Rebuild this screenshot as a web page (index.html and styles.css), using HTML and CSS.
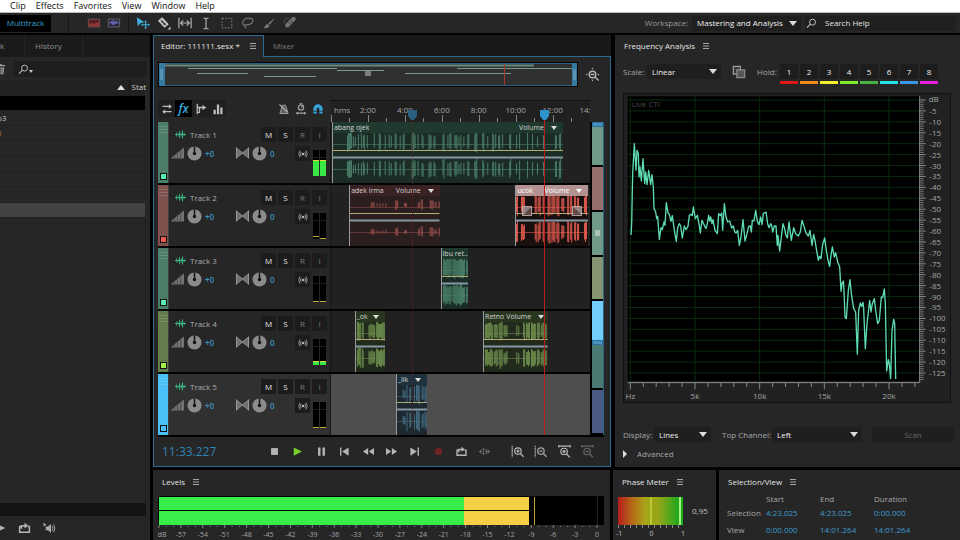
FILE: index.html
```html
<!DOCTYPE html>
<html lang="en">
<head>
<meta charset="utf-8">
<title>111111.sesx</title>
<link rel="stylesheet" href="styles.css">
</head>
<body>
<svg class="sprite" aria-hidden="true">
  <symbol id="i-spectral" viewBox="0 0 16 16"><path d="M1.500 3.500h13v9h-13z" fill="#5a1f22" stroke="#77575a"/><path d="M2 9l3-1 3 1 3-2 3 1v4H2z" fill="#8d3532"/></symbol>
  <symbol id="i-waveview" viewBox="0 0 16 16"><path d="M1.500 3.500h13v9h-13z" fill="#26263c" stroke="#6a6a72"/><path d="M2 8h2l1-2 1 4 1-5 1 5 1-4 1 3 1-3 1 2h2" fill="none" stroke="#7670c8"/></symbol>
  <symbol id="i-move" viewBox="0 0 16 16"><path d="M1 1.500L9.500 7 5.200 8 2 12z" fill="#3fb0e0"/><path d="M11 6v8M7 10h8" stroke="#3fb0e0" stroke-width="1.200"/><path d="M11 4.800l1.600 2H9.400zM11 15.200l1.600-2H9.400zM5.800 10l2-1.600v3.200zM16 10l-2-1.600v3.200z" fill="#3fb0e0"/></symbol>
  <symbol id="i-razor" viewBox="0 0 16 16"><path d="M1 5.500L6 1.500 13.500 9.500 8.500 13.500z" fill="#c4c4c4"/><path d="M4.500 5l5.500 5.500M5 7.200l2-1.700M7.500 9.700l2-1.700" stroke="#2a2a2a" stroke-width="1.200"/><path d="M15.500 12v3.500H12z" fill="#c4c4c4"/></symbol>
  <symbol id="i-slip" viewBox="0 0 16 16"><path d="M1 2v12M15 2v12M3 8h10M6 5L3 8l3 3M10 5l3 3-3 3" fill="none" stroke="#b8b8b8" stroke-width="1.300"/></symbol>
  <symbol id="i-ibeam" viewBox="0 0 16 16"><path d="M5 2.500h2L8 4l1-1.500h2M8 4v9M5 14.500h2L8 13l1 1.500h2" fill="none" stroke="#b8b8b8" stroke-width="1.200"/></symbol>
  <symbol id="i-marquee" viewBox="0 0 16 16"><path d="M2.500 2.500h11v11h-11z" fill="none" stroke="#777" stroke-width="1.200" stroke-dasharray="2 1.500"/></symbol>
  <symbol id="i-lasso" viewBox="0 0 16 16"><path d="M4 11C-1 8 4 2 9 2.500c6 0 6 5 1 7-3 1.200-6 0-6 1.500s2 1 1.500 3.500" fill="none" stroke="#777" stroke-width="1.300"/></symbol>
  <symbol id="i-brush" viewBox="0 0 16 16"><path d="M15 2L9 10 7 8.500zM6.500 9l2 2c-1 3-4 3-7.500 3 2.500-1 2.500-4.500 5.500-5z" fill="#777"/></symbol>
  <symbol id="i-heal" viewBox="0 0 16 16"><path d="M5 10.500L12 3.500" stroke="#747474" stroke-width="5" stroke-linecap="round"/><path d="M6.500 7l3.500 3.500M8.500 5l3.500 3.500" stroke="#262626" stroke-width=".8"/><path d="M1.500 8c0-4 2-6 5-5.500" fill="none" stroke="#747474" stroke-dasharray="1.500 1"/></symbol>
  <symbol id="i-search" viewBox="0 0 16 16"><circle cx="9.500" cy="6" r="4.300" fill="none" stroke="#c2c2c2" stroke-width="1.400"/><path d="M6.500 9L1.500 14" stroke="#c2c2c2" stroke-width="1.600"/></symbol>
  <symbol id="i-trash" viewBox="0 0 16 16"><path d="M2 3.500h12M6 2.500h4" stroke="#a2a2a2" stroke-width="1.800"/><path d="M3 6h10l-1 9H4z" fill="#999"/><path d="M6 7v7M8 7v7M10 7v7" stroke="#444"/></symbol>
  <symbol id="i-menu" viewBox="0 0 8 8"><path d="M1 1.500h6M1 4h6M1 6.500h6" stroke="#a5a5a5"/></symbol>
  <symbol id="i-swap" viewBox="0 0 16 16"><path d="M2 4.500h9M5 11.500h9" stroke="#bdbdbd" stroke-width="1.700"/><path d="M10.500 1.500v6l4-3zM5.500 8.500v6l-4-3z" fill="#bdbdbd"/></symbol>
  <symbol id="i-send" viewBox="0 0 16 16"><path d="M3 1v14M3 6h8" fill="none" stroke="#bdbdbd" stroke-width="1.700"/><path d="M3 12.500h3V6" fill="none" stroke="#bdbdbd" stroke-width="1.500"/><path d="M10 2.500v7l5-3.500z" fill="#bdbdbd"/></symbol>
  <symbol id="i-bars" viewBox="0 0 16 16"><path d="M2 9h3v6H2zM6.500 2h3v13h-3zM11 6h3v9h-3z" fill="#bdbdbd"/></symbol>
  <symbol id="i-metronome" viewBox="0 0 16 16"><path d="M6 3h4l3.500 11h-11z" fill="#5c5c5c" stroke="#a0a0a0" stroke-width="1.300"/><path d="M2 2l10 10" stroke="#b0b0b0" stroke-width="1.500"/></symbol>
  <symbol id="i-timer" viewBox="0 0 16 16"><circle cx="8" cy="6" r="3.500" fill="none" stroke="#a5a5a5" stroke-width="1.600"/><path d="M6 1h4M8 6l2-2M2 13.500h12" fill="none" stroke="#a5a5a5" stroke-width="1.400"/><path d="M4 11.500v4l-3-2zM12 11.500v4l3-2z" fill="#a5a5a5"/></symbol>
  <symbol id="i-magnet" viewBox="0 0 16 16"><path d="M4 14V8a4 4 0 0 1 8 0v6" fill="none" stroke="#36a4da" stroke-width="4.500"/><path d="M1 11h6M9 11h6" stroke="#222"/></symbol>
  <symbol id="i-wave" viewBox="0 0 16 16"><path d="M0 8h16M2.500 5v6M4.800 7v2M6.500 3v10M9 5v6M11 2v12M13.300 6v4" stroke="#3ab585" stroke-width="1.400"/></symbol>
  <symbol id="i-volume" viewBox="0 0 14 12"><path d="M0 11.500L14 0v12H0z" fill="#737373"/><path d="M3.500 8v4M7 5v7M10.500 2v10" stroke="#4a4a4a"/></symbol>
  <symbol id="i-pan" viewBox="0 0 14 12"><path d="M1 1L7 5.500 13 1v10L7 6.500 1 11z" fill="#707070"/><path d="M.500 0v12M13.500 0v12" stroke="#a5a5a5"/><path d="M1 1l6 5-6 5M13 1L7 6l6 5" fill="none" stroke="#999" stroke-width=".8"/></symbol>
  <symbol id="i-knob" viewBox="0 0 16 16"><circle cx="8" cy="8" r="7.500" fill="#8b8b8b"/><circle cx="8" cy="8" r="1.800" fill="#111"/><path d="M8 .5V8" stroke="#161616" stroke-width="1.600"/></symbol>
  <symbol id="i-monitor" viewBox="0 0 16 16"><circle cx="8" cy="8" r="2" fill="#b5b5b5"/><path d="M5 4.500Q2.800 8 5 11.500M11 4.500q2.200 3.500 0 7M3 2.500Q-.5 8 3 13.500M13 2.500q3.500 5.500 0 11" fill="none" stroke="#aaa" stroke-width="1.300"/></symbol>
  <symbol id="i-stop" viewBox="0 0 16 16"><path d="M3 3h10v10H3z" fill="#b5b5b5"/></symbol>
  <symbol id="i-play" viewBox="0 0 16 16"><path d="M2.500 2l12 6-12 6z" fill="#76d02c"/></symbol>
  <symbol id="i-playgrey" viewBox="0 0 16 16"><path d="M2 2l13 6-13 6z" fill="#b5b5b5"/></symbol>
  <symbol id="i-pause" viewBox="0 0 16 16"><path d="M3 2h3.500v12H3zM9.500 2H13v12H9.500z" fill="#b5b5b5"/></symbol>
  <symbol id="i-prev" viewBox="0 0 16 16"><path d="M1.500 2h2v12h-2zM14 2v12L4.500 8z" fill="#b5b5b5"/></symbol>
  <symbol id="i-next" viewBox="0 0 16 16"><path d="M12.500 2h2v12h-2zM2 2v12l9.500-6z" fill="#b5b5b5"/></symbol>
  <symbol id="i-rew" viewBox="0 0 16 16"><path d="M7.500 3v10L0 8zM16 3v10L8.500 8z" fill="#b5b5b5"/></symbol>
  <symbol id="i-fwd" viewBox="0 0 16 16"><path d="M0 3v10l7.500-5zM8.500 3v10L16 8z" fill="#b5b5b5"/></symbol>
  <symbol id="i-rec" viewBox="0 0 16 16"><circle cx="8" cy="8" r="5.500" fill="#6b2422"/></symbol>
  <symbol id="i-loop" viewBox="0 0 16 16"><path d="M3.500 6H1.500v7.500h13V6h-2M4 9V5h5" fill="none" stroke="#b5b5b5" stroke-width="2"/><path d="M8 1v7.500L13 5z" fill="#b5b5b5"/></symbol>
  <symbol id="i-skip" viewBox="0 0 16 16"><path d="M5 4L1 8l4 4M0 8h4M6.500 3v10M9 8h7M9 4l3.500 4L9 12M12.500 5l3 3-3 3" fill="none" stroke="#707070" stroke-width="1.400"/></symbol>
  <symbol id="i-zinv" viewBox="0 0 16 16"><path d="M1.500 1v14" stroke="#b5b5b5" stroke-width="1.500" stroke-dasharray="2 .6"/><circle cx="8.500" cy="7.500" r="4" fill="none" stroke="#b5b5b5" stroke-width="1.500"/><path d="M6.500 7.500h4M8.500 5.500v4M11.500 10.500l4 4" stroke="#b5b5b5" stroke-width="1.600"/></symbol>
  <symbol id="i-zoutv" viewBox="0 0 16 16"><path d="M1.500 1v14" stroke="#a5a5a5" stroke-width="1.500" stroke-dasharray="2 .6"/><circle cx="8.500" cy="7.500" r="4" fill="none" stroke="#a5a5a5" stroke-width="1.500"/><path d="M6.500 7.500h4M11.500 10.500l4 4" stroke="#a5a5a5" stroke-width="1.600"/></symbol>
  <symbol id="i-zinh" viewBox="0 0 16 16"><path d="M1 1.500h14M1 0v3M15 0v3" stroke="#b5b5b5" stroke-width="1.500"/><circle cx="7.500" cy="8" r="4" fill="none" stroke="#b5b5b5" stroke-width="1.500"/><path d="M5.500 8h4M7.500 6v4M10.500 11l4 4" stroke="#b5b5b5" stroke-width="1.600"/></symbol>
  <symbol id="i-zouth" viewBox="0 0 16 16"><path d="M1 1.500h14M1 0v3M15 0v3" stroke="#666" stroke-width="1.500"/><circle cx="7.500" cy="8" r="4" fill="none" stroke="#666" stroke-width="1.500"/><path d="M5.500 8h4M10.500 11l4 4" stroke="#666" stroke-width="1.600"/></symbol>
  <symbol id="i-zfull" viewBox="0 0 16 16"><circle cx="8" cy="8" r="3.500" fill="none" stroke="#b5b5b5" stroke-width="1.500"/><path d="M6 8h4M10.500 10.500l4 4" stroke="#b5b5b5" stroke-width="1.500"/><path d="M8 .5l1 2H7zM8 15.500l1-2H7zM.5 8l2-1v2zM15.500 8l-2-1v2z" fill="#b5b5b5"/></symbol>
  <symbol id="i-speaker" viewBox="0 0 16 16"><path d="M0 1l4 2.500L0 6zM3 6h3l4-3.500v12L6 11H3z" fill="#aaa"/><path d="M11.500 5.500q2 3 0 6M13.500 3.500q3.500 5 0 10" fill="none" stroke="#aaa" stroke-width="1.300"/></symbol>
  <symbol id="i-copy" viewBox="0 0 16 16"><path d="M1.500 1.500h8v9h-8z" fill="#3a3a3a" stroke="#a0a0a0" stroke-width="1.400"/><path d="M5.500 5.500h9v9h-9z" fill="#555" stroke="#8c8c8c" stroke-width="1.400"/></symbol>
</svg>

<nav class="menubar">
  <a href="#">Clip</a><a href="#">Effects</a><a href="#">Favorites</a><a href="#">View</a><a href="#">Window</a><a href="#">Help</a>
</nav>

<header class="toolbar">
  <button class="mode">Multitrack</button>
  <div class="tool-group views">
    <button aria-label="Spectral view"><svg><use href="#i-spectral"/></svg></button>
    <button aria-label="Waveform view"><svg><use href="#i-waveview"/></svg></button>
  </div>
  <div class="tool-group tools">
    <button aria-label="Move"><svg><use href="#i-move"/></svg></button>
    <button aria-label="Razor"><svg><use href="#i-razor"/></svg></button>
    <button aria-label="Slip"><svg><use href="#i-slip"/></svg></button>
    <button aria-label="Time selection"><svg><use href="#i-ibeam"/></svg></button>
    <button aria-label="Marquee"><svg><use href="#i-marquee"/></svg></button>
    <button aria-label="Lasso"><svg><use href="#i-lasso"/></svg></button>
    <button aria-label="Brush"><svg><use href="#i-brush"/></svg></button>
    <button aria-label="Healing"><svg><use href="#i-heal"/></svg></button>
  </div>
  <label class="dim workspace-label" for="workspace">Workspace:</label>
  <span class="select workspace"><select id="workspace"><option>Mastering and Analysis</option></select></span>
  <label class="help-search"><svg><use href="#i-search"/></svg><input type="text" value="Search Help" aria-label="Search Help"></label>
</header>

<main class="workspace-grid">
  <section class="files">
    <div class="tabs"><a class="tab cut" href="#">k</a><a class="tab" href="#">History</a></div>
    <div class="files-tools">
      <button class="trash" aria-label="Delete"><svg><use href="#i-trash"/></svg></button>
      <div class="files-search"><svg><use href="#i-search"/></svg><i class="caret"></i></div>
    </div>
    <table class="files-table">
      <thead><tr><th><i class="caret up"></i></th><th class="status">Stat</th></tr></thead>
      <tbody>
        <tr class="black"><td colspan="2"></td></tr>
        <tr><td colspan="2">o3</td></tr>
        <tr><td colspan="2" class="warn">3</td></tr>
        <tr><td colspan="2"></td></tr>
        <tr><td colspan="2"></td></tr>
        <tr><td colspan="2"></td></tr>
        <tr><td colspan="2"></td></tr>
        <tr class="active"><td colspan="2"></td></tr>
      </tbody>
    </table>
    <div class="files-rest"></div>
    <div class="files-scroll"></div>
    <div class="files-foot">
      <button aria-label="Play"><svg><use href="#i-playgrey"/></svg></button>
      <button aria-label="Loop"><svg><use href="#i-loop"/></svg></button>
      <button aria-label="Auto-play"><svg><use href="#i-speaker"/></svg></button>
    </div>
  </section>

  <div class="right">
    <div class="row top-row">
      <section class="editor">
        <div class="editor-tabs">
          <a class="tab current" href="#">Editor: 111111.sesx *<svg class="menu"><use href="#i-menu"/></svg></a>
          <a class="tab mixer" href="#">Mixer</a>
        </div>
        <div class="editor-body">
          <div class="overview-row">
            <svg class="overview" viewBox="158 62 420 25" preserveAspectRatio="none">
              <path d="M158 62h420v25H158z" fill="#050505"/>
              <path d="M159 63h418v23H159z" fill="#2c5f7d"/>
              <path d="M159 64h418v21H159z" fill="#303030"/>
              <path d="M165 65.500h369" stroke="#668b7c" stroke-width="2"/>
              <path d="M188 68.500h149M197 73.500h51M264 76.500h52M337 70.500h47M457 68.500h115M405 73.500h106" stroke="#749b8a"/>
              <path d="M365 71h6v5h-6z" fill="#7d7d7d"/>
              <path d="M504.500 64v21" stroke="#a5362f"/>
              <path d="M159 63h6v23h-6zM572 63h5v23h-5z" fill="#3679a1"/>
              <path d="M160 69h3v11h-3zM573 69h3v11h-3z" fill="#5a93b4"/>
            </svg>
            <button class="zoom-full" aria-label="Zoom out full"><svg><use href="#i-zfull"/></svg></button>
          </div>
          <div class="session">
            <div class="heads" id="heads">
              <div class="head-tools">
                <div class="tool-set">
                  <button aria-label="Inputs and outputs"><svg><use href="#i-swap"/></svg></button>
                  <button class="fx">fx</button>
                  <button aria-label="Sends"><svg><use href="#i-send"/></svg></button>
                  <button aria-label="EQ"><svg><use href="#i-bars"/></svg></button>
                </div>
                <div class="tool-set plain">
                  <button aria-label="Metronome"><svg><use href="#i-metronome"/></svg></button>
                  <button aria-label="Time stretch"><svg><use href="#i-timer"/></svg></button>
                  <button aria-label="Snapping"><svg><use href="#i-magnet"/></svg></button>
                </div>
              </div>
            </div>
            <div class="lanes" id="lanes"><div class="ruler" id="ruler"><span class="unit">hms</span></div></div>
            <div class="track-nav">
              <i class="grab"></i><i class="seg s1"></i><i class="seg s2"></i><i class="seg s3"></i><i class="seg s4"></i><i class="seg s5"></i><i class="grab"></i><i class="seg s6"></i><i class="seg s7"></i>
            </div>
          </div>
          <div class="transport">
            <span class="time">11:33.227</span>
            <div class="transport-buttons" id="transport"></div>
          </div>
        </div>
      </section>

      <section class="frequency">
        <h2>Frequency Analysis<svg class="menu"><use href="#i-menu"/></svg></h2>
        <div class="scale-row">
          <label for="scale">Scale:</label>
          <span class="select scale"><select id="scale"><option>Linear</option></select></span>
          <button class="copy" aria-label="Copy graph"><svg><use href="#i-copy"/></svg></button>
          <span class="hold-label">Hold:</span>
          <div class="holds">
            <button class="h1">1</button><button class="h2">2</button><button class="h3">3</button><button class="h4">4</button><button class="h5">5</button><button class="h6">6</button><button class="h7">7</button><button class="h8">8</button>
          </div>
        </div>
        <svg class="chart" id="chart" viewBox="24 8 984 930"></svg>
        <div class="display-row">
          <label for="display">Display:</label>
          <span class="select display"><select id="display"><option>Lines</option></select></span>
          <label class="channel-label" for="channel">Top Channel:</label>
          <span class="select channel"><select id="channel"><option>Left</option></select></span>
          <button class="scan" disabled>Scan</button>
        </div>
        <button class="advanced"><i></i>Advanced</button>
      </section>
    </div>

    <div class="row bottom-row">
      <section class="levels">
        <h2>Levels<svg class="menu"><use href="#i-menu"/></svg></h2>
        <svg class="level-meter" id="levels" viewBox="0 0 446 43"></svg>
      </section>
      <section class="phase">
        <h2>Phase Meter<svg class="menu"><use href="#i-menu"/></svg></h2>
        <div class="phase-row">
          <div class="phase-meter">
            <div class="phase-bar"></div>
            <div class="phase-ticks"></div>
            <div class="phase-scale"><span>-1</span><span>0</span><span>1</span></div>
          </div>
          <span class="phase-value">0,95</span>
        </div>
      </section>
      <section class="selection">
        <h2>Selection/View<svg class="menu"><use href="#i-menu"/></svg></h2>
        <table>
          <thead><tr><th></th><th>Start</th><th>End</th><th>Duration</th></tr></thead>
          <tbody>
            <tr><th>Selection</th><td>4:23.025</td><td>4:23.025</td><td>0:00.000</td></tr>
            <tr><th>View</th><td>0:00.000</td><td>14:01.264</td><td>14:01.264</td></tr>
          </tbody>
        </table>
      </section>
    </div>
  </div>
</main>
<script src="app.js"></script>
</body>
</html>
```
FILE: styles.css
```css
* { box-sizing: border-box; }
body {
  margin: 0;
  height: 100vh;
  overflow: hidden;
  display: flex;
  flex-direction: column;
  background: #020202;
  color: #c0c0c0;
  font: 500 8px/12px "Open Sans", "Noto Sans", sans-serif;
}
a { color: inherit; text-decoration: none; }
button, input, select {
  margin: 0;
  padding: 0;
  border: 0;
  border-radius: 0;
  background: none;
  color: inherit;
  font: inherit;
}
button { display: flex; align-items: center; justify-content: center; }
h2 { margin: 0; font-size: 8px; font-weight: 500; color: #e4e4e4; display: flex; align-items: center; gap: 7px; height: 22px; }
table { border-collapse: collapse; }
th { font-weight: 500; text-align: left; }
.sprite { position: absolute; width: 0; height: 0; }
.menu { width: 8px; height: 8px; }

.menubar {
  display: flex;
  gap: 10px;
  height: 13px;
  padding: 0 10px;
  background: #fff;
  color: #111;
  font-size: 9px;
  font-weight: 400;
  line-height: 11px;
  border-bottom: 1px solid #bbb;
}

.toolbar {
  display: flex;
  align-items: center;
  height: 20px;
  background: #262626;
}
.mode { width: 51px; height: 17px; background: #000; color: #3ca0d4; }
.tool-group { display: flex; height: 20px; }
.tool-group button { width: 21px; }
.tool-group svg { width: 14px; height: 14px; }
.views { margin-left: 17px; padding: 0 4px 0 15px; border-left: 1px solid #1a1a1a; border-right: 1px solid #1a1a1a; }
.views button { width: 20px; }
.tools { margin-left: 3px; }
.workspace-label { margin: 0 4px 0 auto; color: #9a9a9a; }
.select { position: relative; display: flex; height: 15px; background: #1f1f1f; }
.select select { appearance: none; width: 100%; padding: 0 5px; color: #f0f0f0; }
.select::after {
  content: "";
  position: absolute;
  right: 4px;
  top: 5px;
  border: 4px solid transparent;
  border-top: 5px solid #ddd;
  border-bottom: 0;
  pointer-events: none;
}
.workspace { width: 109px; }
.help-search { display: flex; align-items: center; gap: 8px; width: 151px; height: 15px; margin: 0 4px; background: #202020; padding-left: 1px; }
.help-search svg { width: 11px; height: 11px; flex: none; }
.help-search input { color: #e0e0e0; min-width: 0; }

.workspace-grid {
  flex: 1;
  min-height: 0;
  margin-top: 2px;
  display: grid;
  grid-template-columns: 150px minmax(0, 1fr);
  gap: 3px;
}
.tab { display: flex; align-items: center; color: #909090; }

.files { display: flex; flex-direction: column; background: #262626; }
.tabs { display: flex; height: 22px; background: #1a1a1a; }
.tabs .tab { padding: 0 20px 0 10px; border-right: 1px solid #242424; }
.tabs .cut { width: 25px; padding: 0; }
.files-tools { display: flex; align-items: center; gap: 7px; margin-top: 4px; height: 16px; padding-right: 3px; }
.trash { width: 7px; justify-content: flex-end; overflow: hidden; }
.trash svg { width: 13px; height: 12px; flex: none; }
.files-search { flex: 1; height: 16px; background: #1e1e1e; display: flex; align-items: center; padding-left: 4px; }
.files-search svg { width: 11px; height: 11px; }
.caret { display: inline-block; border: 3px solid transparent; border-top-color: #c8c8c8; border-bottom: 0; }
.files-search .caret { border-width: 2px; border-top-width: 3px; border-bottom: 0; margin-top: 4px; }
.caret.up { border: 4px solid transparent; border-bottom: 5px solid #e0e0e0; border-top: 0; }
.files-table { width: 145px; height: 138px; margin-top: 3px; table-layout: fixed; line-height: 12px; }
.files-table th, .files-table td { height: 15px; padding: 0; border-bottom: 1px solid #202020; white-space: nowrap; }
.files-table th { text-align: right; padding-right: 4px; background: #222; vertical-align: middle; }
.files-table th.status { width: 16px; padding: 0 0 0 2px; border-left: 1px solid #161616; text-align: left; color: #ccc; }
.files-table .black { background: #000; }
.files-table .active { background: #434343; }
.files-table .warn { color: #a37545; }
.files-table td { text-indent: -3px; }
.files-rest { flex: 1; width: 146px; border-right: 1px solid #1e1e1e; }
.files-scroll { height: 13px; width: 146px; background: #141414; }
.files-foot { display: flex; align-items: center; height: 24px; gap: 12px; }
.files-foot svg { width: 13px; height: 12px; }
.files-foot button:first-child { width: 6px; justify-content: flex-end; overflow: hidden; }
.files-foot button:first-child svg { width: 10px; flex: none; }
.files-foot button { flex: none; }

.right { display: flex; flex-direction: column; gap: 3px; min-width: 0; }
.row { display: flex; gap: 4px; }
.top-row { flex: 1; min-height: 0; }
.bottom-row { height: 70px; gap: 3px; }

.editor { flex: 1; min-width: 0; display: flex; flex-direction: column; }
.editor-tabs { display: flex; height: 22px; background: #191919; }
.editor-tabs .current {
  width: 111px;
  padding: 0 6px 1px 7px;
  justify-content: space-between;
  background: #262626;
  border: 1px solid #2d6c92;
  border-bottom: 0;
  color: #e4e4e4;
}
.editor-tabs .mixer { flex: 1; padding-left: 9px; border-bottom: 1px solid #2d6c92; color: #7d7d7d; }
.editor-body {
  flex: 1;
  display: flex;
  flex-direction: column;
  padding: 5px 6px 0 4px;
  background: #262626;
  border: 1px solid #2d6c92;
  border-top: 0;
}
.overview-row { display: flex; }
.overview { flex: 1; min-width: 0; height: 25px; }
.zoom-full { width: 26px; flex: none; justify-content: flex-end; padding-right: 4px; }
.zoom-full svg { width: 15px; height: 15px; }
.session { display: flex; margin-top: 13px; background: linear-gradient(#262626, #262626) top / 100% 22px no-repeat #020202; }
.heads { width: 173px; flex: none; }
.head-tools { display: flex; justify-content: space-between; height: 22px; padding-right: 5px; }
.tool-set { display: flex; height: 17px; background: #202020; }
.tool-set.plain { background: none; }
.tool-set button { width: 17px; height: 17px; }
.tool-set svg { width: 12px; height: 12px; }
.tool-set .fx { background: #000; color: #3ca9dc; font-size: 12px; font-style: italic; font-weight: 600; }

.head { display: flex; height: 61px; margin-bottom: 2px; background: #262626; border-right: 1px solid #161616; }
.head.selected { background: #303030; }
.head-color {
  width: 11px;
  display: flex;
  flex-direction: column;
  justify-content: space-between;
  align-items: center;
  padding: 4px 0 3px;
  border-right: 1px solid #404040;
}
.head-color::before { content: ""; width: 9px; height: 9px; background: repeating-linear-gradient(rgba(255,255,255,.14) 0 1px, transparent 1px 3px); }
.head-color i { width: 7px; height: 7px; border: 1px solid #111; }
.green .head-color { background: #4c7d69; } .green .head-color i { background: #55eeb0; }
.red .head-color { background: #80524e; } .red .head-color i { background: #f25d4b; }
.olive .head-color { background: #647d4c; } .olive .head-color i { background: #a0f04f; }
.blue .head-color { background: #4ac0f6; } .blue .head-color i { background: #4ac0f6; }
.head-main { flex: 1; padding: 5px 3px 0 2px; }
.head-line { display: flex; height: 15px; align-items: center; }
.head-line svg { flex: none; }
.head-line + .head-line { margin-top: 4px; align-items: flex-start; line-height: 15px; }
.head-name { margin: 0 auto 0 4px; color: #acacac; }
.wave-icon { width: 11px; height: 11px; margin-left: 4px; }
.toggles { display: flex; gap: 2px; }
.toggle { width: 15px; height: 15px; background: #1c1c1c; color: #e0e0e0; }
.toggle.off { color: #7a7a7a; }
.toggle svg { width: 12px; height: 10px; }
.wedge { width: 13px; height: 12px; margin-top: 1px; }
.knob { width: 15px; height: 15px; margin: 0 3px; }
.head-value { width: 31px; color: #3d95c4; font-weight: 600; }
.head-value.pan { width: auto; margin-right: auto; }
.vu { width: 15px; height: 26px; margin: 4px 0 0 2px; display: flex; gap: 1px; padding: 0 1px; flex: none; }
.vu i { flex: 1; background: linear-gradient(#202020, #202020) 0 7px / 100% 1px no-repeat #000; display: flex; align-items: flex-end; }
.vu b { width: 100%; background: #3ae845; border-top: 1px solid #e0d63c; }
.vu .idle { background: none; border-color: #b8ac30; }

.lanes { position: relative; flex: 1; min-width: 0; overflow: hidden; }
.ruler { position: relative; height: 22px; background: #202020; border-top: 1px solid #111; overflow: hidden; color: #a6a6a6; }
.ruler .unit { display: block; padding: 3px 0 0 3px; }
.ruler .label { position: absolute; top: 3px; width: 30px; margin-left: -15px; text-align: center; }
.ruler .tick { position: absolute; bottom: 0; width: 1px; height: 4px; background: #858585; }
.ruler .tick.major { height: 7px; }
.lane { position: relative; height: 61px; margin-bottom: 2px; background: #212121; }
.lane.selected { background: #4e4e4e; }
.clip { position: absolute; top: 0; bottom: 0; overflow: hidden; border-left: 1px solid #999; color: #d4d4d4; }
.clip > svg { position: absolute; left: 0; top: 0; width: 100%; height: 100%; }
.clip-head { position: relative; display: flex; align-items: center; justify-content: space-between; gap: 2px; height: 11px; padding: 0 6px 0 1px; white-space: nowrap; font-size: 7px; }
.clip-head.plain { padding-right: 0; }
.clip-head button { gap: 7px; height: 11px; }
.clip-head.tight { justify-content: flex-start; padding-right: 0; }
.clip-head .caret { border-width: 3px; border-top: 4px solid #ddd; border-bottom: 0; }
.clip.green { background: #1b2c26; } .clip.green .clip-head { background: #20392f; }
.clip.red { background: #2a1e1e; } .clip.red .clip-head { background: #3b2222; }
.clip.hot { background: #180f0f; color: #fff; } .clip.hot .clip-head { background: #b39391; }
.clip.hot .caret { border-top-color: #fff; }
.clip.olive { background: #222a1b; } .clip.olive .clip-head { background: #28351f; }
.clip.blue { background: #1c2930; } .clip.blue .clip-head { background: #1f323d; }
.fade { position: absolute; top: 21px; width: 10px; height: 10px; background: linear-gradient(135deg, #998f8d 50%, #5f4b49 50%); border: 1px solid #c9b5b3; opacity: .85; }
.fade.in { left: 6px; }
.fade.out { right: 6px; background: linear-gradient(225deg, #998f8d 50%, #5f4b49 50%); }
.playhead, .cursor { position: absolute; bottom: 2px; top: 20px; width: 1px; background: #b81e1c; }
.cursor { background: repeating-linear-gradient(#782020 0 1px, transparent 1px 3px); }
.playhead svg, .cursor svg { position: absolute; left: -4px; top: -10px; width: 9px; height: 10px; fill: #2d93cc; }
.cursor svg { fill: #2b5f7f; }

.track-nav { display: flex; flex-direction: column; width: 12px; flex: none; margin: 22px 0 2px 2px; border-right: 1px solid #2c6484; }
.seg { flex: 43; margin-bottom: 2px; }
.seg.s1 { flex: 38; } .seg.s5 { flex: 39; margin: 0; }
.grab { height: 5px; background: #4793bd; border: 1px solid #2b739b; }
.s1, .s3 { background: #6f9a87; } .s2 { background: #976f6d; } .s4 { background: #849470; }
.s5 { background: #72cdfb; } .s6 { background: #4b7a72; } .s7 { background: #4b5a82; }
.s3 { background: linear-gradient(#a9c2b7, #a9c2b7) center / 5px 6px no-repeat #6f9a87; }

.transport { flex: 1; display: flex; align-items: center; }
.time { width: 110px; padding-left: 4px; color: #2f84b5; font-size: 12px; font-weight: 400; line-height: 16px; }
.transport-buttons { flex: 1; display: flex; justify-content: space-between; padding-right: 10px; }
.transport-buttons svg { width: 13px; height: 13px; }
.transport-buttons .sm svg { width: 13px; height: 11px; }
.transport-buttons .sm + .lg { margin-left: 9px; }

.frequency { width: 345px; flex: none; display: flex; flex-direction: column; padding: 0 6px 0 8px; background: #262626; color: #a6a6a6; }
.frequency h2 { padding-left: 1px; }
.scale-row { display: flex; margin-top: 7px; height: 20px; align-items: flex-start; line-height: 15px; }
.scale { width: 74px; margin-left: 2px; }
.scale-row label { width: 22px; white-space: nowrap; }
.copy { margin: 1px 11px 0 11px; }
.copy svg { width: 14px; height: 14px; }
.hold-label { width: 23px; }
.holds { display: flex; gap: 2px; }
.holds button { width: 18px; height: 20px; padding-bottom: 2px; color: #f0f0f0; border-bottom: 3px solid; background: linear-gradient(#1d1d1d, #1d1d1d) top / 100% 15px no-repeat; }
.holds .h1 { border-color: #e01818; } .holds .h2 { border-color: #f08a1d; } .holds .h3 { border-color: #f2ee2b; } .holds .h4 { border-color: #80ec26; }
.holds .h5 { border-color: #47b244; } .holds .h6 { border-color: #20e6ea; } .holds .h7 { border-color: #3e95e8; } .holds .h8 { border-color: #ea1be0; }
.chart { display: block; margin: 9px 3px 0 0; }
.chart text { font-size: 24px; fill: #a4a4a4; }
.chart .watermark { fill: #4a4a4a; }
.display-row { display: flex; align-items: center; margin-top: 24px; height: 15px; white-space: nowrap; }
.display { width: 57px; margin-left: 2px; }
.display-row label { width: 29px; }
.display-row .channel-label { width: 49px; margin-left: 11px; }
.channel { width: 90px; margin-left: 1px; }
.scan { flex: 1; height: 15px; margin-left: 10px; background: #1f1f1f; color: #666; }
.advanced { align-self: flex-start; gap: 10px; margin-top: 6px; color: #a8a8a8; }
.advanced i { border: 4px solid transparent; border-left: 4px solid #ddd; border-right: 0; }

.levels, .phase, .selection { background: #262626; }
.bottom-row h2 { height: 24px; padding-left: 9px; }
.levels { flex: 1; min-width: 0; }
.level-meter { display: block; margin: 2px 6px 0 5px; }
.level-meter text { font-size: 7px; fill: #a4a4a4; text-anchor: middle; }
.phase { width: 103px; flex: none; }
.phase-row { display: flex; gap: 9px; padding: 3px 0 0 5px; }
.phase-meter { width: 65px; }
.phase-bar {
  height: 28px;
  background:
    linear-gradient(#b8c832, #b8c832) 50% 0 / 2px 100% no-repeat,
    linear-gradient(#a4f080, #a4f080) 97% 0 / 2px 100% no-repeat,
    linear-gradient(90deg, #b51c1a, #b56a18 22%, #a8a518 42%, #98a518 62%, #2ba71c 90%, #18b018);
}
.phase-ticks { height: 3px; background: repeating-linear-gradient(90deg, #888 0 1px, transparent 1px 6px); }
.phase-scale { display: flex; justify-content: space-between; margin: 0 -2px; font-size: 7px; line-height: 11px; }
.phase-value { line-height: 28px; }
.selection { width: 241px; flex: none; }
.selection table { margin: -1px 0 0 8px; table-layout: fixed; line-height: 12px; color: #a6a6a6; }
.selection th, .selection td { padding: 0; width: 54px; height: 17px; }
.selection th:first-child { width: 39px; }
.selection thead th { height: 12px; }
.selection tbody tr:first-child > * { height: 16px; }
.selection td { color: #3d9ccf; }
```
FILE: app.js
```js
const LENGTH = 841.264;
const pct = s => (s / LENGTH * 100) + '%';
const use = (id, cls) => `<svg${cls ? ` class="${cls}"` : ''}><use href="#i-${id}"/></svg>`;

// Bursts are [from, to, amplitude] in clip units; each clip is `w` units wide.
const tracks = [
  { color: 'green', vu: [16, 16], clips: [{
    color: 'green', name: 'abang ojek', auto: 'Volume', start: 3, end: 753, w: 231, wave: '#4a7c67',
    bursts: [[14,18,10],[20,20,6],[22,22,5],[25,25,8],[28,28,9],[30,31,8],[34,34,8],[41,41,9],[46,47,10],[52,52,9],[56,56,8],[58,58,7],[62,63,9],[67,67,7],[70,71,10],[79,82,10],[85,85,9],[89,90,8],[96,98,9],[101,102,8],[110,111,10],[115,115,8],[117,118,9],[122,124,8],[126,126,6],[128,128,8],[131,131,7],[135,136,9],[142,144,11],[150,151,10],[155,155,9],[160,161,10],[163,163,8],[166,167,8],[170,170,9],[177,178,10],[184,184,9],[187,187,11],[195,195,10],[200,200,8],[205,205,7],[211,211,8],[223,224,8],[227,228,10]] }] },
  { color: 'red', vu: [3, 1], clips: [{
    color: 'red', name: 'adek irma', auto: 'Volume', start: 59, end: 353, w: 91, wave: '#8f4a47',
    bursts: [[21,24,3],[27,27,2],[30,30,2],[33,33,2],[36,36,3],[46,48,5],[55,57,2],[69,70,4],[72,73,6],[81,84,5],[86,87,3],[90,91,5]] }, {
    color: 'hot', name: 'ucok', auto: 'Volume', start: 599, end: 836, w: 73, wave: '#dd5a4e',
    bursts: [[0,1,12],[5,8,9],[19,20,12],[22,24,11],[27,28,12],[32,34,12],[36,39,11],[41,43,12],[46,48,8],[52,53,12],[55,56,12],[59,60,12],[62,63,11],[69,71,11]] }] },
  { color: 'green', vu: [1, 1], clips: [{
    color: 'green', name: 'ibu ret...', start: 356, end: 446, w: 28, wave: '#4a8068',
    bursts: [[1,9,10],[11,23,11],[25,27,9]] }] },
  { color: 'olive', vu: [4, 4], clips: [{
    color: 'olive', name: '_ok', arrow: true, start: 77, end: 177, w: 31, wave: '#6a8a4c',
    bursts: [[1,4,11],[6,7,10],[13,19,8],[21,30,10]] }, {
    color: 'olive', name: 'Retno', auto: 'Volume', tight: true, start: 494, end: 704, w: 65, wave: '#6a8a4c',
    bursts: [[1,8,9],[10,13,9],[15,18,11],[20,23,7],[33,33,8],[35,35,7],[40,41,10],[43,46,9],[48,52,10],[54,56,9],[58,63,9]] }] },
  { color: 'blue', vu: [1, 1], selected: true, clips: [{
    color: 'blue', name: '_lik', arrow: true, start: 211, end: 313, w: 32, wave: '#456a80',
    bursts: [[6,8,5],[10,10,11],[13,14,9],[18,18,10],[20,23,11],[26,27,9],[29,31,10]] }] }
];

let seed = 7;
const rnd = () => (seed = (seed * 16807) % 2147483647) / 2147483647;

function wave(clip) {
  let d = '';
  for (const [a, b, amp] of clip.bursts)
    for (let x = a; x <= b; x++)
      for (const c of [20, 47]) {
        const up = amp * (0.65 + 0.35 * rnd()), down = amp * (0.6 + 0.4 * rnd());
        d += `M${x + 0.5} ${(c - up).toFixed(1)}V${(c + down).toFixed(1)}`;
      }
  const w = clip.w;
  return `<svg viewBox="0 0 ${w} 61" preserveAspectRatio="none">
    <path d="M0 22.500H${w}M0 47.500H${w}" stroke="${clip.wave}" opacity=".6"/>
    <path d="${d}" stroke="${clip.wave}"/>
    <path d="M0 28.500H${w}" stroke="#b3ad77"/>
    <path d="M0 35.500H${w}" stroke="#8499a5" stroke-width="2"/></svg>`;
}

function clipHtml(c) {
  const right = c.auto ? `<button>${c.auto}<i class="caret"></i></button>` : c.arrow ? '<i class="caret"></i>' : '';
  const fades = c.color === 'hot' ? '<i class="fade in"></i><i class="fade out"></i>' : '';
  return `<div class="clip ${c.color}" style="left:${pct(c.start)};width:${pct(c.end - c.start)}">${wave(c)}
    <div class="clip-head${right ? '' : ' plain'}${c.tight ? ' tight' : ''}"><span>${c.name}</span>${right}</div>${fades}</div>`;
}

const heads = document.getElementById('heads');
const lanes = document.getElementById('lanes');
tracks.forEach((t, i) => {
  const sel = t.selected ? ' selected' : '';
  heads.insertAdjacentHTML('beforeend', `<div class="head ${t.color}${sel}">
    <div class="head-color"><i></i></div>
    <div class="head-main">
      <div class="head-line">${use('wave', 'wave-icon')}<span class="head-name">Track ${i + 1}</span>
        <div class="toggles"><button class="toggle">M</button><button class="toggle">S</button><button class="toggle off">R</button><button class="toggle off">I</button></div></div>
      <div class="head-line">${use('volume', 'wedge')}${use('knob', 'knob')}<span class="head-value">+0</span>
        ${use('pan', 'wedge')}${use('knob', 'knob')}<span class="head-value pan">0</span>
        <button class="toggle" aria-label="Monitor input">${use('monitor')}</button>
        <div class="vu">${t.vu.map(v => `<i><b class="${v < 4 ? 'idle' : ''}" style="height:${v}px"></b></i>`).join('')}</div></div>
    </div></div>`);
  lanes.insertAdjacentHTML('beforeend', `<div class="lane${sel}">${t.clips.map(clipHtml).join('')}</div>`);
});

const ruler = document.getElementById('ruler');
for (let m = 0; m <= 14; m++) {
  const left = pct(m * 60);
  ruler.insertAdjacentHTML('beforeend', `<i class="tick${m % 2 ? '' : ' major'}" style="left:${left}"></i>` +
    (m && m % 2 === 0 ? `<span class="label" style="left:${left}">${m}:00</span>` : ''));
}
const pin = '<svg viewBox="0 0 9 10"><path d="M0 0h9v6L6 10H3L0 6z"/></svg>';
lanes.insertAdjacentHTML('beforeend',
  `<div class="cursor" style="left:${pct(263.025)}">${pin}</div><div class="playhead" style="left:${pct(693.227)}">${pin}</div>`);

document.getElementById('transport').innerHTML =
  ['stop', 'play', 'pause', 'prev', 'rew', 'fwd', 'next', 'rec', 'loop', 'skip', 'zinv', 'zoutv', 'zinh', 'zouth']
    .map((id, i) => `<button class="${i < 10 ? 'sm' : 'lg'}" aria-label="${id}">${use(id)}</button>`).join('');

// Spectrum plot: 32.76 units per 5 dB, 194 units per 5 kHz.
const spectrum = '48,434 50,400 53,250 58,160 63,240 66,180 70,190 72,260 75,230 79,272 84,205 89,280 92,245 96,283 101,240 107,283 111,253 115,290 117,355 122,365 125,385 128,378 133,447 138,412 142,418 147,395 150,405 154,337 159,368 163,372 168,393 172,376 176,405 180,432 184,453 188,412 193,400 197,407 202,443 208,407 213,418 219,408 223,375 228,372 232,376 235,350 241,385 247,375 252,400 256,428 261,390 267,403 273,415 277,400 281,375 284,392 287,380 291,400 294,388 300,420 307,430 311,370 316,376 320,368 323,420 328,340 333,380 338,395 344,392 350,413 355,407 359,424 363,428 368,420 373,465 378,440 384,388 390,452 396,430 401,408 406,407 409,425 412,390 417,392 422,360 427,393 432,403 437,380 441,403 445,370 453,365 458,400 462,412 467,400 470,405 473,425 478,407 483,407 487,465 489,435 494,482 499,440 504,400 509,415 512,432 517,443 522,395 529,450 536,412 542,430 550,437 556,425 561,390 567,408 573,428 580,437 585,420 591,465 596,432 600,450 604,475 610,510 614,498 618,505 623,462 629,443 634,480 639,510 644,528 648,495 652,470 658,500 662,487 668,515 674,530 678,603 681,580 685,572 687,600 690,680 694,685 698,628 700,600 705,568 709,610 716,655 722,665 727,792 731,660 736,638 740,648 744,636 746,655 751,775 756,700 760,665 764,630 768,665 772,640 778,625 782,660 788,700 793,690 799,620 803,622 808,596 811,640 815,842 820,808 823,820 827,865 831,720 836,687 839,700 842,866';
const dbY = db => 29 + db * 6.552;
const khzX = k => 46 + k * 38.8;
let grid = '', ticks = 'M914 18V877M38 877H914', minor = '', text = '';
for (let db = 0; db <= 128; db++) {
  if (db % 5 === 0) {
    grid += `M38 ${dbY(db)}H912`;
    ticks += `M914 ${dbY(db)}h18`;
    text += `<text x="${db ? 943 : 941}" y="${dbY(db) + (db ? 9 : 6)}">${db ? -db : 'dB'}</text>`;
  } else minor += `M916 ${dbY(db)}h10`;
}
for (let k = 0; k <= 22; k++) {
  ticks += `M${khzX(k)} 877v${k % 5 ? 13 : 20}`;
  if (k % 5 === 0) {
    grid += `M${khzX(k)} 18V872`;
    text += `<text x="${khzX(k)}" y="926" text-anchor="middle">${k ? k + 'k' : 'Hz'}</text>`;
  }
}
document.getElementById('chart').innerHTML = `
  <path d="M25.500 9.500h981v927h-981z" fill="#212121" stroke="#101010" stroke-width="3"/>
  <path d="M38 18h874v854H38z" fill="#000"/>
  <path d="${grid}" stroke="#0b2a0e" stroke-width="3"/>
  <path d="${minor}" stroke="#777" stroke-width="3"/>
  <path d="${ticks}" stroke="#8a8a8a" stroke-width="3" fill="none"/>
  <text class="watermark" x="50" y="51">Live CTI</text>${text}
  <polyline points="${spectrum}" fill="none" stroke="#5fdcb4" stroke-width="4" stroke-linejoin="round"/>`;

// Level meter: 438 units from -60 dB to 0 dB.
const lx = db => 1 + (60 + db) * 7.3;
let major = '', small = '', labels = '<text x="4" y="41">dB</text>';
for (let db = -60; db <= 0; db++) {
  if (db % 3) small += `M${lx(db)} 30v1`;
  else {
    major += `M${lx(db)} 29v3`;
    if (db > -60) labels += `<text x="${lx(db)}" y="41">${db}</text>`;
  }
}
document.getElementById('levels').innerHTML = `
  <path d="M0 0h446v29H0z" fill="#000"/>
  <path d="M1 1h305v13H1zM1 15h305v14H1z" fill="#3aee49"/>
  <path d="M306 1h65v13h-65zM306 15h65v14h-65z" fill="#f5d044"/>
  <path d="M376.500 1v28" stroke="#b8a52e"/>
  <path d="M439.500 1v28" stroke="#222"/>
  <path d="${major}${small}" stroke="#858585"/>${labels}`;
```
